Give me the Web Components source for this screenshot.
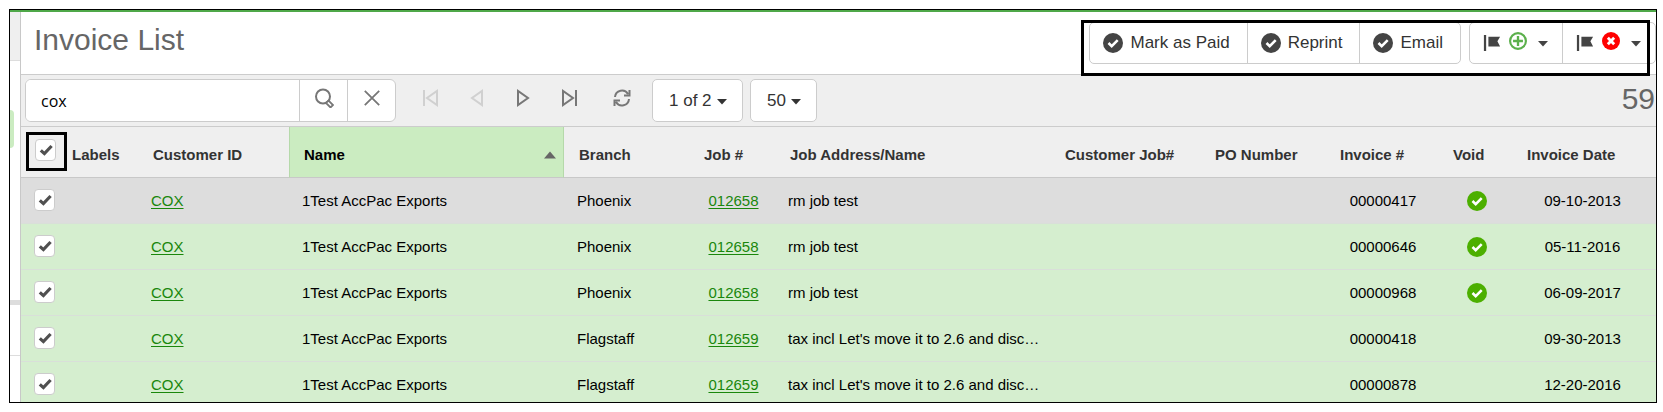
<!DOCTYPE html>
<html lang="en">
<head>
<meta charset="utf-8">
<title>Invoice List</title>
<style>
  body {
    margin: 0;
    padding: 9px 6px 9px 9px;
    background: #fff;
    font-family: "Liberation Sans", Arial, sans-serif;
    font-size: 15px;
    color: #000;
  }
</style>
</head>
<body>
<invoice-app></invoice-app>

<script>
const ICONS = {
  check: '<circle cx="10" cy="10" r="10" fill="currentColor"/><path d="M5.5 10l3.2 3.2 6-6" fill="none" stroke="#fff" stroke-width="2.6"/>',
  tick: '<path d="M3.500 10.500l4.500 4L17 5" fill="none" stroke="currentColor" stroke-width="4"/>',
  search: '<circle cx="9" cy="8.500" r="7" fill="none" stroke="currentColor" stroke-width="2"/><path d="M12 15l2.500-2.500 4.500 4.500-2.500 2.500z" fill="#fff" stroke="currentColor" stroke-width="1.800"/>',
  close: '<path d="M2 2l16 16M18 2L2 18" stroke="currentColor" stroke-width="2" fill="none"/>',
  first: '<path d="M3 2v16M16 3v14L6 10z" fill="none" stroke="currentColor" stroke-width="2"/>',
  prev: '<path d="M15 3v14L5 10z" fill="none" stroke="currentColor" stroke-width="2"/>',
  next: '<path d="M5 3v14l10-7z" fill="none" stroke="currentColor" stroke-width="2"/>',
  last: '<path d="M17 2v16M4 3v14l10-7z" fill="none" stroke="currentColor" stroke-width="2"/>',
  refresh: '<path d="M3 9a7 7 0 0 1 13-3M17 11a7 7 0 0 1-13 3M17.500 2v5.500H12M2.500 18v-5.500H8" fill="none" stroke="currentColor" stroke-width="2"/>',
  flag: '<path d="M1 1h2.500v18H1zM6 3h13l-3 5 3 6H6z" fill="currentColor"/>',
  plus: '<circle cx="10" cy="10" r="8.800" fill="none" stroke="currentColor" stroke-width="2.400"/><path d="M10 4.500v11M4.500 10h11" stroke="currentColor" stroke-width="2.600"/>',
  cross: '<circle cx="10" cy="10" r="10" fill="currentColor"/><path d="M6.500 6.500l7 7M13.500 6.500l-7 7" stroke="#fff" stroke-width="3.200"/>',
  caret: '<path d="M0 6h20L10 17z" fill="currentColor"/>',
  sort: '<path d="M0 16L10 4l10 12z" fill="currentColor"/>'
};

const INVOICES = [
  ['COX', '1Test AccPac Exports', 'Phoenix', '012658', 'rm job test', '00000417', true, '09-10-2013'],
  ['COX', '1Test AccPac Exports', 'Phoenix', '012658', 'rm job test', '00000646', true, '05-11-2016'],
  ['COX', '1Test AccPac Exports', 'Phoenix', '012658', 'rm job test', '00000968', true, '06-09-2017'],
  ['COX', '1Test AccPac Exports', 'Flagstaff', '012659', "tax incl Let's move it to 2.6 and disc…", '00000418', false, '09-30-2013'],
  ['COX', '1Test AccPac Exports', 'Flagstaff', '012659', "tax incl Let's move it to 2.6 and disc…", '00000878', false, '12-20-2016']
];

class UiIcon extends HTMLElement {
  connectedCallback() {
    const size = this.getAttribute('size') || 20;
    const shadow = this.attachShadow({mode: 'open'});
    shadow.innerHTML = `
      <style>
        :host { display: inline-flex; flex: none; }
        svg { display: block; }
      </style>
      <svg width="${size}" height="${size}" viewBox="0 0 20 20" aria-hidden="true">${ICONS[this.getAttribute('name')]}</svg>
    `;
  }
}
customElements.define('ui-icon', UiIcon);

// square tick box, the mark lies over the native input
class TickBox extends HTMLElement {
  connectedCallback() {
    const shadow = this.attachShadow({mode: 'open'});
    shadow.innerHTML = `
      <style>
        :host { display: inline-grid; vertical-align: top; color: #505050; }
        input, ui-icon { grid-area: 1 / 1; }
        input {
          appearance: none;
          box-sizing: border-box;
          width: 21px;
          height: 22px;
          margin: 0;
          border: 1px solid #ccc;
          border-radius: 4px;
          background: #fff;
        }
        ui-icon { place-self: center; pointer-events: none; visibility: hidden; }
        input:checked + ui-icon { visibility: visible; }
      </style>
      <input type="checkbox" checked aria-label="${this.getAttribute('label')}">
      <ui-icon name="tick" size="16"></ui-icon>
    `;
  }
}
customElements.define('tick-box', TickBox);

class ActionButton extends HTMLElement {
  connectedCallback() {
    const shadow = this.attachShadow({mode: 'open'});
    const label = this.getAttribute('label');
    shadow.innerHTML = `
      <style>
        :host { display: flex; border-left: 1px solid #ccc; }
        :host(:first-child) { border-left: 0; }
        button {
          display: flex;
          align-items: center;
          gap: 7px;
          padding: 0 17px 0 13px;
          border: 0;
          background: none;
          font: inherit;
          font-size: 17px;
          line-height: 20px;
          color: #333;
          white-space: nowrap;
        }
        :host([menu]) button { padding-right: 14px; gap: 8px; }
      </style>
      <button type="button" ${label ? `aria-label="${label}"` : ''}><slot></slot></button>
    `;
  }
}
customElements.define('action-button', ActionButton);

class ButtonGroup extends HTMLElement {
  connectedCallback() {
    const shadow = this.attachShadow({mode: 'open'});
    shadow.innerHTML = `
      <style>
        :host {
          display: flex;
          box-sizing: border-box;
          height: 42px;
          border: 1px solid #ccc;
          border-radius: 5px;
          background: #fff;
        }
      </style>
      <slot></slot>
    `;
  }
}
customElements.define('button-group', ButtonGroup);

class PageHeader extends HTMLElement {
  connectedCallback() {
    const shadow = this.attachShadow({mode: 'open'});
    shadow.innerHTML = `
      <style>
        :host {
          display: flex;
          justify-content: space-between;
          align-items: flex-start;
          padding: 10px 0 10px 13px;
          border-bottom: 1px solid #ccc;
          background: #fff;
        }
        h1 {
          margin: 0;
          font-size: 30px;
          font-weight: normal;
          line-height: 36px;
          color: #666;
        }
        ui-icon { color: #444; }
        .actions { display: flex; gap: 8px; position: relative; }
        /* callout frame over the actions */
        .callout {
          position: absolute;
          inset: -2px 6px -12px -8px;
          border: 3px solid #000;
          z-index: 1;
          pointer-events: none;
        }
        .badge { margin-bottom: 4px; }
        .plus { color: #5cb04c; }
        .cross { color: #f00; }
        .caret { margin-left: 3px; }
      </style>
      <h1>Invoice List</h1>
      <div class="actions">
        <button-group>
          <action-button><ui-icon name="check"></ui-icon>Mark as Paid</action-button>
          <action-button><ui-icon name="check"></ui-icon>Reprint</action-button>
          <action-button><ui-icon name="check"></ui-icon>Email</action-button>
        </button-group>
        <button-group>
          <action-button menu label="Add flag"><ui-icon name="flag" size="18"></ui-icon><ui-icon class="badge plus" name="plus" size="18"></ui-icon><ui-icon class="caret" name="caret" size="10"></ui-icon></action-button>
          <action-button menu label="Remove flag"><ui-icon name="flag" size="18"></ui-icon><ui-icon class="badge cross" name="cross" size="18"></ui-icon><ui-icon class="caret" name="caret" size="10"></ui-icon></action-button>
        </button-group>
        <div class="callout"></div>
      </div>
    `;
  }
}
customElements.define('page-header', PageHeader);

class DropSelect extends HTMLElement {
  connectedCallback() {
    const shadow = this.attachShadow({mode: 'open'});
    shadow.innerHTML = `
      <style>
        :host { display: inline-grid; align-items: center; color: #333; }
        select, ui-icon { grid-area: 1 / 1; }
        select {
          appearance: none;
          box-sizing: border-box;
          height: 43px;
          padding: 0 30px 0 16px;
          border: 1px solid #ccc;
          border-radius: 5px;
          background: #fff;
          font: inherit;
          font-size: 17px;
          color: inherit;
        }
        ui-icon { justify-self: end; margin-right: 16px; pointer-events: none; }
      </style>
      <select aria-label="${this.getAttribute('label')}"><option>${this.getAttribute('value')}</option></select>
      <ui-icon name="caret" size="10"></ui-icon>
    `;
  }
}
customElements.define('drop-select', DropSelect);

class ListToolbar extends HTMLElement {
  connectedCallback() {
    const shadow = this.attachShadow({mode: 'open'});
    shadow.innerHTML = `
      <style>
        :host {
          display: flex;
          align-items: center;
          gap: 7px;
          padding: 4px 1px 4px 4px;
          border-bottom: 1px solid #ccc;
          background: #efefef;
        }
        button {
          display: flex;
          align-items: center;
          justify-content: center;
          width: 46px;
          height: 41px;
          padding: 0 0 6px;
          border: 0;
          background: none;
          color: #777;
        }
        button:disabled { color: #d0d0d0; }
        .search {
          display: flex;
          border: 1px solid #ccc;
          border-radius: 6px;
          background: #fff;
          overflow: hidden;
        }
        .search button { width: 48px; border-left: 1px solid #ccc; }
        input {
          box-sizing: border-box;
          width: 273px;
          padding: 0 15px;
          border: 0;
          font: 16px "Open Sans", "Noto Sans", sans-serif;
          color: #000;
        }
        .pager { display: flex; padding-left: 5px; }
        .total {
          margin-left: auto;
          font-size: 30px;
          line-height: 38px;
          padding-bottom: 4px;
          color: #666;
        }
      </style>
      <form class="search" role="search">
        <input type="text" value="cox" aria-label="Search">
        <button type="button" aria-label="Find"><ui-icon name="search"></ui-icon></button>
        <button type="reset" aria-label="Clear"><ui-icon name="close" size="18"></ui-icon></button>
      </form>
      <div class="pager">
        <button type="button" aria-label="First page" disabled><ui-icon name="first"></ui-icon></button>
        <button type="button" aria-label="Previous page" disabled><ui-icon name="prev"></ui-icon></button>
        <button type="button" aria-label="Next page"><ui-icon name="next"></ui-icon></button>
        <button type="button" aria-label="Last page"><ui-icon name="last"></ui-icon></button>
      </div>
      <button type="button" aria-label="Refresh"><ui-icon name="refresh"></ui-icon></button>
      <drop-select label="Page" value="1 of 2"></drop-select>
      <drop-select label="Rows per page" value="50"></drop-select>
      <span class="total">59</span>
    `;
  }
}
customElements.define('list-toolbar', ListToolbar);

class InvoiceTable extends HTMLElement {
  row([id, name, branch, job, address, invoice, isVoid, date]) {
    return `
      <tr>
        <td><tick-box label="Select invoice ${invoice}"></tick-box></td>
        <td></td>
        <td><a href="#">${id}</a></td>
        <td>${name}</td>
        <td>${branch}</td>
        <td class="center"><a href="#">${job}</a></td>
        <td>${address}</td>
        <td></td>
        <td></td>
        <td class="center">${invoice}</td>
        <td class="center">${isVoid ? '<ui-icon class="void" name="check"></ui-icon>' : ''}</td>
        <td class="center">${date}</td>
      </tr>`;
  }

  connectedCallback() {
    // 0 takes what is left over
    const widths = [36, 81, 151, 275, 125, 86, 0, 150, 125, 113, 74, 144];
    const shadow = this.attachShadow({mode: 'open'});
    shadow.innerHTML = `
      <style>
        :host { display: block; }
        table {
          width: 100%;
          table-layout: fixed;
          border-collapse: separate;
          border-spacing: 0;
          line-height: 20px;
          white-space: nowrap;
        }
        th, td { box-sizing: border-box; text-align: left; }
        th {
          height: 51px;
          padding: 5px 0 0 15px;
          border-bottom: 1px solid #c8c8c8;
          background: #efefef;
          color: #333;
        }
        th:first-child { padding: 0 0 4px 14px; position: relative; }
        th.sorted {
          padding-left: 14px;
          border-left: 1px solid #b5d9aa;
          border-right: 1px solid #b5d9aa;
          background: #cbecc1;
          color: #000;
        }
        .sorted div { display: flex; justify-content: space-between; align-items: center; padding-right: 7px; }
        .sorted ui-icon { color: #666; }
        td {
          height: 46px;
          padding: 0 10px 0 13px;
          border-bottom: 1px solid #d9dfd9;
          background: #d5eecf;
        }
        td:first-child { padding-right: 0; padding-bottom: 2px; }
        td:last-child { padding-right: 16px; }
        td.center { text-align: center; }
        tbody tr:first-child td { background: #ddd; }
        tbody tr:last-child td { height: 40px; padding-top: 5px; border: 0; }
        a { color: #1a870c; text-underline-offset: 2px; }
        .void { color: #4caf00; vertical-align: middle; }
        /* callout frame over the select-all box */
        .callout {
          position: absolute;
          inset: 5px -10px 6px 5px;
          border: 3px solid #000;
          z-index: 1;
          pointer-events: none;
        }
      </style>
      <table>
        <colgroup>${widths.map(w => `<col${w ? ` style="width: ${w}px"` : ''}>`).join('')}</colgroup>
        <thead>
          <tr>
            <th><tick-box label="Select all"></tick-box><div class="callout"></div></th>
            <th>Labels</th>
            <th>Customer ID</th>
            <th class="sorted"><div>Name<ui-icon name="sort" size="12"></ui-icon></div></th>
            <th>Branch</th>
            <th>Job #</th>
            <th>Job Address/Name</th>
            <th>Customer Job#</th>
            <th>PO Number</th>
            <th>Invoice #</th>
            <th>Void</th>
            <th>Invoice Date</th>
          </tr>
        </thead>
        <tbody>${INVOICES.map(this.row).join('')}</tbody>
      </table>
    `;
  }
}
customElements.define('invoice-table', InvoiceTable);

// sliver of the navigation that shows left of the list
class SideEdge extends HTMLElement {
  connectedCallback() {
    const shadow = this.attachShadow({mode: 'open'});
    shadow.innerHTML = `
      <style>
        :host {
          display: flex;
          flex-direction: column;
          width: 10px;
          border-right: 1px solid #c8c8c8;
          background: #fff;
        }
        .top { height: 48px; border-bottom: 1px solid #ddd; background: #efefef; }
        .current { width: 4px; height: 38px; margin-top: 49px; border-radius: 0 4px 4px 0; background: #cbecc1; }
        .bar { height: 5px; margin-top: 152px; background: #ddd; }
        .line { height: 1px; margin-top: 50px; background: #ddd; }
      </style>
      <div class="top"></div>
      <div class="current"></div>
      <div class="bar"></div>
      <div class="line"></div>
    `;
  }
}
customElements.define('side-edge', SideEdge);

class InvoiceApp extends HTMLElement {
  connectedCallback() {
    const shadow = this.attachShadow({mode: 'open'});
    shadow.innerHTML = `
      <style>
        :host { display: block; border: 1px solid #000; }
        .screen { display: flex; border-top: 2px solid #4fa849; }
        main { flex: 1; min-width: 0; }
      </style>
      <div class="screen">
        <side-edge></side-edge>
        <main>
          <page-header></page-header>
          <list-toolbar></list-toolbar>
          <invoice-table></invoice-table>
        </main>
      </div>
    `;
  }
}
customElements.define('invoice-app', InvoiceApp);
</script>
</body>
</html>
